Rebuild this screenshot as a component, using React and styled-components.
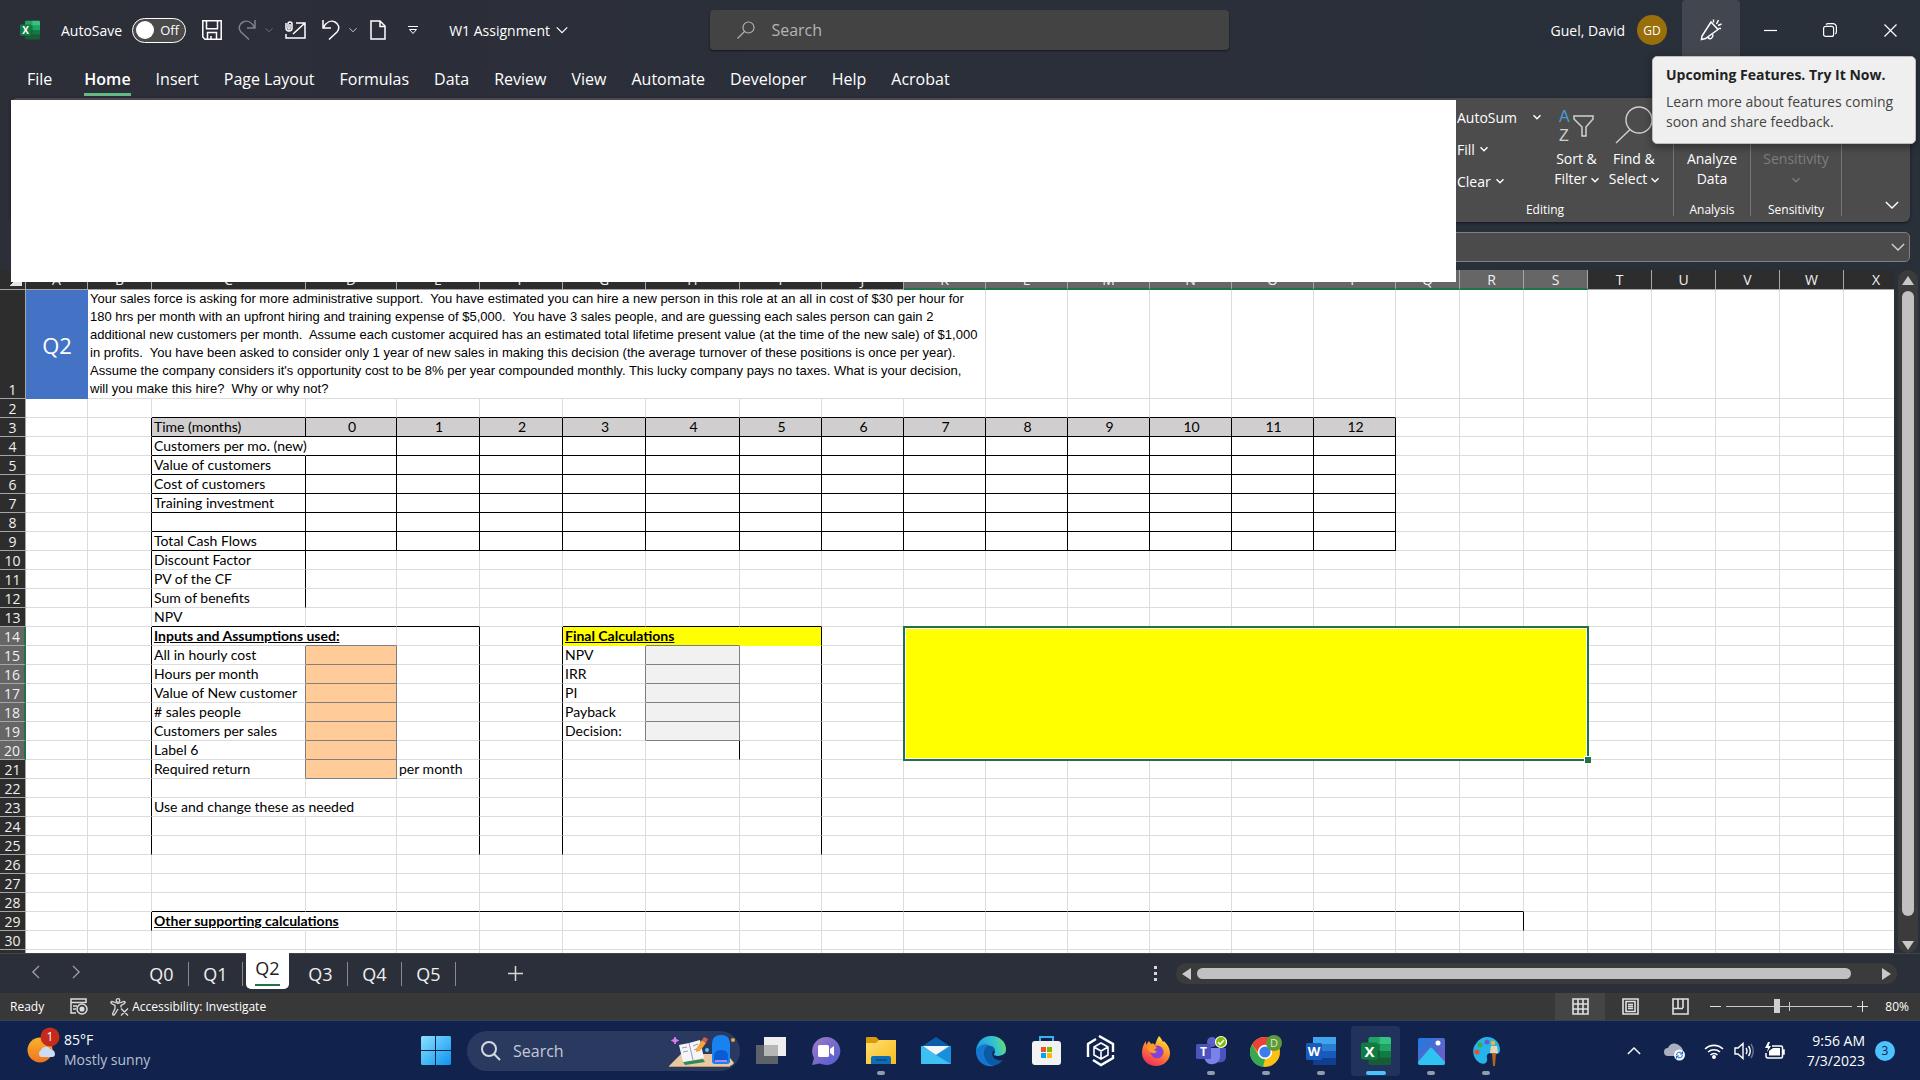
import { useState } from "react";
import styled, { createGlobalStyle } from "styled-components";

const COLUMNS = [
    ["A",62],["B",64],["C",154],["D",91],["E",83],["F",83],["G",83],["H",94],["I",82],["J",82],["K",82],["L",82],
    ["M",82],["N",82],["O",82],["P",82],["Q",64],["R",64],["S",64],["T",64],["U",64],["V",64],["W",64],["X",0]
];
const LETTERS = COLUMNS.map(c => c[0]);
const GRID = "#dcdcdc";
const GRAY = "#7f7f7f";
const QUESTION = `Your sales force is asking for more administrative support.  You have estimated you can hire a new person in this role at an all in cost of $30 per hour for
180 hrs per month with an upfront hiring and training expense of $5,000.  You have 3 sales people, and are guessing each sales person can gain 2
additional new customers per month.  Assume each customer acquired has an estimated total lifetime present value (at the time of the new sale) of $1,000
in profits.  You have been asked to consider only 1 year of new sales in making this decision (the average turnover of these positions is once per year).
Assume the company considers it's opportunity cost to be 8% per year compounded monthly. This lucky company pays no taxes. What is your decision,
will you make this hire?  Why or why not?`;

const TEXTS = {
    C3: "Time (months)", C4: "Customers per mo. (new)", C5: "Value of customers", C6: "Cost of customers",
    C7: "Training investment", C9: "Total Cash Flows", C10: "Discount Factor", C11: "PV of the CF",
    C12: "Sum of benefits", C13: "NPV", C14: "Inputs and Assumptions used:", C15: "All in hourly cost",
    C16: "Hours per month", C17: "Value of New customer", C18: "# sales people", C19: "Customers per sales",
    C20: "Label 6", C21: "Required return", E21: "per month", C23: "Use and change these as needed",
    G14: "Final Calculations", G15: "NPV", G16: "IRR", G17: "PI", G18: "Payback", G19: "Decision:",
    C29: "Other supporting calculations"
};
const TITLES = ["C14", "G14", "C29"];

function between(letter, from, to){
    return letter >= from && letter <= to;
}
function cellLook(l, r){
    const look = { right: GRID, bottom: GRID, bg: "#ffffff" };
    if(between(l,"C","P") && r >= 2 && r <= 9) look.bottom = "#000000";
    if(between(l,"B","P") && r >= 3 && r <= 9) look.right = "#000000";
    if((l === "B" || l === "C") && r >= 10 && r <= 12) look.right = "#000000";
    if(between(l,"C","P") && r === 3) look.bg = "#d0cece";
    if((between(l,"C","E") || between(l,"G","I")) && r === 13) look.bottom = "#000000";
    if("BEFI".includes(l) && r >= 14 && r <= 25) look.right = "#000000";
    if(between(l,"G","I") && r === 14){
        look.bg = "#ffff00";
        look.bottom = "#ffff00";
        if(l !== "I") look.right = "#ffff00";
    }
    if(l === "D" && r >= 14 && r <= 21) look.bottom = GRAY;
    if((l === "C" || l === "D") && r >= 15 && r <= 21) look.right = GRAY;
    if(l === "D" && r >= 15 && r <= 21) look.bg = "#ffcb99";
    if(l === "H" && r >= 14 && r <= 19) look.bottom = GRAY;
    if((l === "G" || l === "H") && r >= 15 && r <= 19) look.right = GRAY;
    if(l === "H" && r >= 15 && r <= 19) look.bg = "#f1f1f1";
    if(l === "H" && r === 20) look.right = "#000000";
    if(between(l,"C","R") && r === 28) look.bottom = "#000000";
    if((l === "B" || l === "R") && r === 29) look.right = "#000000";
    if(["C4","C14","C23","C29"].includes(l + r)) look.right = look.bg;
    return look;
}

export default function App(){
    return(
        <Page>
            <GlobalStyle/>
            <TitleBar/>
            <RibbonTabs/>
            <Ribbon/>
            <FormulaBar><Chevron size={14}/></FormulaBar>
            <Sheet/>
            <SheetTabs/>
            <StatusBar/>
            <Taskbar/>
            <BlankPanel/>
            <Tooltip role="tooltip">
                <strong>Upcoming Features. Try It Now.</strong>
                <p>Learn more about features coming soon and share feedback.</p>
            </Tooltip>
        </Page>
    );
}

function Chevron({ size = 8, dir = "down" }){
    const turn = { down: 0, up: 180, left: 90, right: -90 }[dir];
    return(
        <svg width={size} height={size} viewBox="0 0 16 16" fill="none" stroke="currentColor" strokeWidth={size < 10 ? 3 : 1.6} aria-hidden="true">
            <path d="M1 4.5 8 11.5 15 4.5" transform={`rotate(${turn} 8 8)`}/>
        </svg>
    );
}
function ExcelIcon({ size }){
    return(
        <svg width={size} height={size} viewBox="0 0 32 32" aria-hidden="true">
            <rect x="8" y="1" width="24" height="30" rx="2" fill="#185c37"/>
            <path d="M10 1h11v8H8V3a2 2 0 0 1 2-2Z" fill="#21a366"/>
            <path d="M20 1h10a2 2 0 0 1 2 2v6H20Z" fill="#33c481"/>
            <path d="M8 9h12v7H8Z" fill="#107c41"/>
            <path d="M20 9h12v7H20Z" fill="#21a366"/>
            <path d="M20 16h12v7H20Z" fill="#107c41"/>
            <rect x="0" y="7" width="18" height="18" rx="2" fill="#107c41"/>
            <text x="9" y="22" textAnchor="middle" fontSize="16" fontWeight="700" fontFamily="Open Sans, sans-serif" fill="#fff">X</text>
        </svg>
    );
}

function TitleBar(){
    const [autoSave,setAutoSave] = useState(false);
    return(
        <TITLEBAR>
            <QuickAccess>
                <ExcelIcon size={20}/>
                <AutoSave>
                    AutoSave
                    <Toggle>
                        <input type="checkbox" checked={autoSave} onChange={e => {setAutoSave(e.target.checked)}}/>
                        <i/>{autoSave ? "On" : "Off"}
                    </Toggle>
                </AutoSave>
                <ToolButton aria-label="Save" $gap={16}>
                    <svg width="20" height="20" viewBox="0 0 20 20"><path d="M.8.8h18.4v18.4H3L.8 17ZM4.500.8v8h11V.8M5.500 19v-6.500h9V19M9 19v-3"/></svg>
                </ToolButton>
                <ToolButton aria-label="Redo" $gap={16} $dim>
                    <svg width="18" height="20" viewBox="0 0 18 20"><path d="M17 0v8H9M16.500 7.500C13.500 2 9 0 5 2S0 8.500 3 12l8 7.500"/></svg>
                    <Chevron/>
                </ToolButton>
                <ToolButton aria-label="Email" $gap={12}>
                    <svg width="21" height="18" viewBox="0 0 21 18"><path d="M11 2h9v15H1v-4M20 2 8 13M1 2v5a3 3 0 0 0 6 0V3a2 2 0 0 0-4 0v4a1 1 0 0 0 2 0V3"/></svg>
                </ToolButton>
                <ToolButton aria-label="Undo" $gap={16}>
                    <svg width="18" height="20" viewBox="0 0 18 20"><path d="M1 0v8h8M1.500 7.500C4.500 2 9 0 13 2s5 6.500 2 10l-8 7.500"/></svg>
                    <Chevron/>
                </ToolButton>
                <ToolButton aria-label="New file" $gap={13}>
                    <svg width="16" height="20" viewBox="0 0 16 20"><path d="M1 1h9l5 5v13H1ZM10 1v5.500h5"/></svg>
                </ToolButton>
                <ToolButton aria-label="Customize toolbar" $gap={22} $thin>
                    <svg width="10" height="10" viewBox="0 0 10 10"><path d="M0 1.500h10M1.500 4.500h7L5 8.500Z"/></svg>
                </ToolButton>
                <FileName>W1 Assignment <Chevron size={12}/></FileName>
            </QuickAccess>
            <SearchBox>
                <svg width="18" height="18" viewBox="0 0 18 18" fill="none" stroke="#b0b0b0" strokeWidth="1.2" aria-hidden="true"><circle cx="11.500" cy="6.500" r="5.500"/><path d="M7.500 10.500.5 17.500"/></svg>
                <input type="search" placeholder="Search" aria-label="Search"/>
            </SearchBox>
            <WindowArea>
                <span>Guel, David</span>
                <Avatar>GD</Avatar>
                <WindowButton $lit aria-label="Upcoming features">
                    <svg width="22" height="22" viewBox="0 0 22 22" fill="none" stroke="#fff" strokeWidth="1.5"><path d="m11 3 7 7.500L5.500 19.500 1.500 20.500 2 17ZM8 18.500c2 2.500 5 1 5-3M13.500 3.500V.5M16.500 5l2-4M18 6.500l3.500-1.500M18.500 9.500h2.500"/></svg>
                </WindowButton>
                <WindowButton aria-label="Minimize"><svg width="13" height="13" viewBox="0 0 13 13" stroke="#fff" strokeWidth="1.2"><path d="M0 6.500h13"/></svg></WindowButton>
                <WindowButton aria-label="Restore"><svg width="14" height="14" viewBox="0 0 14 14" fill="none" stroke="#fff" strokeWidth="1.2"><rect x=".6" y="3.400" width="10" height="10" rx="2"/><path d="M3 1.500Q4 .6 5 .6h5a3.400 3.400 0 0 1 3.400 3.400v5q0 1-1 2"/></svg></WindowButton>
                <WindowButton aria-label="Close"><svg width="13" height="13" viewBox="0 0 13 13" stroke="#fff" strokeWidth="1.200"><path d="m.5.5 12 12M12.500.5l-12 12"/></svg></WindowButton>
            </WindowArea>
        </TITLEBAR>
    );
}

function RibbonTabs(){
    const [active,setActive] = useState("Home");
    const tabs = ["File","Home","Insert","Page Layout","Formulas","Data","Review","View","Automate","Developer","Help","Acrobat"];
    return(
        <TABS>
            {tabs.map(item => <RibbonTab key={item} $active={item === active} onClick={() => {setActive(item)}}>{item}</RibbonTab>)}
        </TABS>
    );
}

function Ribbon(){
    return(
        <RIBBON>
            <Group $width={257}>
                <GroupBody $end={9}>
                    <SmallCommands>
                        <button>AutoSum <Chevron/></button>
                        <button>Fill <Chevron/></button>
                        <button>Clear <Chevron/></button>
                    </SmallCommands>
                    <BigCommand>
                        <svg width="36" height="38" viewBox="0 0 36 38" aria-hidden="true">
                            <text x="1" y="15.500" fontSize="16" fontFamily="Liberation Sans, sans-serif" fill="#4a9bd8">A</text>
                            <text x="1" y="34.500" fontSize="16" fontFamily="Liberation Sans, sans-serif" fill="#d0d0d0">Z</text>
                            <path d="M16 10h19v3l-7 8v9h-4v-9l-8-8Z" fill="none" stroke="#d0d0d0" strokeWidth="1.500"/>
                        </svg>
                        <span>Sort &amp;</span><span>Filter <Chevron/></span>
                    </BigCommand>
                    <BigCommand>
                        <svg width="38" height="38" viewBox="0 0 38 38" fill="none" stroke="#d0d0d0" strokeWidth="1.400" aria-hidden="true"><circle cx="24" cy="14" r="13"/><path d="M15 23.500 1 37"/></svg>
                        <span>Find &amp;</span><span>Select <Chevron/></span>
                    </BigCommand>
                </GroupBody>
                <GroupName>Editing</GroupName>
            </Group>
            <Group $width={77}>
                <GroupBody>
                    <BigCommand>
                        <svg width="40" height="38" viewBox="0 0 40 38" fill="none" stroke="#e0e0e0" strokeWidth="2" aria-hidden="true"><path d="M1 1h38v36H1Z"/></svg>
                        <span>Analyze</span><span>Data</span>
                    </BigCommand>
                </GroupBody>
                <GroupName>Analysis</GroupName>
            </Group>
            <Group $width={91}>
                <GroupBody>
                    <BigCommand disabled>
                        <svg width="38" height="38" viewBox="0 0 38 38" aria-hidden="true"><path d="M4 4h30v24H4Z" fill="none" stroke="#777"/></svg>
                        <span>Sensitivity</span><span><Chevron/></span>
                    </BigCommand>
                </GroupBody>
                <GroupName>Sensitivity</GroupName>
            </Group>
            <Collapse aria-label="Collapse ribbon"><Chevron size={14}/></Collapse>
        </RIBBON>
    );
}

function Sheet(){
    const rows = Array.from({ length: 29 }, (_, i) => i + 2);
    return(
        <SHEET>
            <Grid>
                <colgroup>
                    <col width="26"/>
                    {COLUMNS.map(([l,w]) => <col key={l} width={w || undefined}/>)}
                </colgroup>
                <thead>
                    <tr>
                        <Corner aria-label="Select all"/>
                        {LETTERS.map(l => <ColHead key={l} scope="col" $on={between(l,"K","S")}>{l}</ColHead>)}
                    </tr>
                </thead>
                <tbody>
                    <tr>
                        <RowHead scope="row">1</RowHead>
                        <QuestionNo>Q2</QuestionNo>
                        <Question colSpan={10}>{QUESTION}</Question>
                        {LETTERS.slice(11).map(l => <Cell key={l} $right={GRID} $bottom={GRID}/>)}
                    </tr>
                    {rows.map(r => <SheetRow key={r} r={r}/>)}
                    <tr>
                        <RowHead/>
                        {LETTERS.map(l => <Cell key={l} $right={GRID} $bottom={GRID}/>)}
                    </tr>
                </tbody>
            </Grid>
            <VScroll>
                <svg width="12" height="9" viewBox="0 0 12 9"><path d="M6 0 12 9H0Z"/></svg>
                <i/>
                <svg width="12" height="9" viewBox="0 0 12 9"><path d="M6 9 0 0h12Z"/></svg>
            </VScroll>
        </SHEET>
    );
}
function SheetRow({ r }){
    const inside = r >= 14 && r <= 20;
    return(
        <tr>
            <RowHead scope="row" $on={inside}>{r}</RowHead>
            {LETTERS.map(l => {
                if(inside && between(l,"K","S")){
                    return r === 14 && l === "K" ? <Selected key={l} colSpan={9} rowSpan={7}/> : null;
                }
                const look = cellLook(l, r);
                const month = r === 3 && between(l,"D","P");
                return(
                    <Cell key={l} $bg={look.bg} $right={look.right} $bottom={look.bottom} $center={month} $title={TITLES.includes(l + r)}>
                        {month ? LETTERS.indexOf(l) - 3 : TEXTS[l + r]}
                    </Cell>
                );
            })}
        </tr>
    );
}

function SheetTabs(){
    const [active,setActive] = useState("Q2");
    return(
        <SHEETTABS>
            <TabArrows>
                <button aria-label="Previous sheet"><Chevron size={14} dir="left"/></button>
                <button aria-label="Next sheet"><Chevron size={14} dir="right"/></button>
            </TabArrows>
            {["Q0","Q1","Q2","Q3","Q4","Q5"].map(q => (
                <SheetTab key={q} $active={q === active} onClick={() => {setActive(q)}}><span>{q}</span></SheetTab>
            ))}
            <AddSheet aria-label="New sheet">
                <svg width="15" height="15" viewBox="0 0 15 15" stroke="#d8d8d8" strokeWidth="1.500"><path d="M7.500 0v15M0 7.500h15"/></svg>
            </AddSheet>
            <Dots><i/><i/><i/></Dots>
            <HScroll>
                <svg width="9" height="12" viewBox="0 0 9 12"><path d="M0 6 9 0v12Z"/></svg>
                <i/>
                <svg width="9" height="12" viewBox="0 0 9 12"><path d="M9 6 0 0v12Z"/></svg>
            </HScroll>
        </SHEETTABS>
    );
}

function StatusBar(){
    const [zoom,setZoom] = useState(40);
    return(
        <STATUS>
            <span>Ready</span>
            <svg width="18" height="17" viewBox="0 0 18 17" fill="none" stroke="#ddd" strokeWidth="1.500"><path d="M6 15H1V1h15v4M1 4.500h15M3 8h4M3 11h3"/><circle cx="12" cy="11" r="5"/><circle cx="12" cy="11" r="1.800" fill="#ddd"/></svg>
            <AccessButton>
                <svg width="19" height="18" viewBox="0 0 19 18" fill="none" stroke="#ddd" strokeWidth="1.300"><circle cx="8" cy="2.500" r="1.800"/><path d="M8 5.500 2 3.500Q0 4 1.500 5.500L5 7.500v3L2.500 16q.5 2 2 .5L8 11M8 5.500l6-2q2 .5.5 2L11 7.500v2M11 10.500l7 7M18 10.500l-7 7"/></svg>
                Accessibility: Investigate
            </AccessButton>
            <ViewButton $on $first aria-label="Normal view">
                <svg width="17" height="17" viewBox="0 0 17 17"><path d="M1 1h15v15H1ZM6 1v15M11 1v15M1 6h15M1 11h15"/></svg>
            </ViewButton>
            <ViewButton aria-label="Page layout view">
                <svg width="17" height="17" viewBox="0 0 17 17"><path d="M1 1h15v15H1ZM4 3.500h9v10H4ZM6 6.500h5M6 8.500h5M6 10.500h5"/></svg>
            </ViewButton>
            <ViewButton aria-label="Page break view">
                <svg width="17" height="17" viewBox="0 0 17 17"><path d="M1 1h15v15H1ZM6 1v9M11 1v9M1 10.500h10"/></svg>
            </ViewButton>
            <ZoomButton aria-label="Zoom out"><svg width="11" height="11" viewBox="0 0 11 11"><path d="M0 5.500h11"/></svg></ZoomButton>
            <Zoom type="range" min="0" max="100" value={zoom} onChange={e => {setZoom(e.target.value)}} aria-label="Zoom"/>
            <ZoomButton aria-label="Zoom in"><svg width="11" height="11" viewBox="0 0 11 11"><path d="M0 5.500h11M5.500 0v11"/></svg></ZoomButton>
            <Percent>80%</Percent>
        </STATUS>
    );
}

/* taskbar drawings share a 32px box */
function Icon({ children }){
    return <svg width="32" height="32" viewBox="0 0 32 32" aria-hidden="true">{children}</svg>;
}
const APPS = [
    { name: "Task view", icon: <Icon><path d="M1 10h22v19H1Z" fill="#5d6169"/><path d="M9 2h22v19H9Z" fill="#eeeeee"/><path d="M9 10h14v11H9Z" fill="#b4b6b8"/></Icon> },
    { name: "Chat", icon: <Icon>
        <defs><linearGradient id="chat" x1="0" y1="0" x2="1" y2="1"><stop offset="0" stopColor="#9f7bc6"/><stop offset="1" stopColor="#4f5bd0"/></linearGradient></defs>
        <path d="M16 2a14 14 0 1 1-6 26.500L2 30l2-7A14 14 0 0 1 16 2Z" fill="url(#chat)"/><rect x="8" y="10" width="11" height="12" rx="1.500" fill="#fff"/><path d="m20 14 4-3v10l-4-3Z" fill="#fff"/></Icon> },
    { name: "File Explorer", open: true, icon: <Icon>
        <defs><linearGradient id="folder" x1="0" y1="0" x2="1" y2="1"><stop offset="0" stopColor="#ffdf70"/><stop offset="1" stopColor="#f8bc1d"/></linearGradient></defs>
        <path d="M1 3q0-1 1-1h9l3 3v6H1Z" fill="#d99a0b"/><path d="M1 8h10l3-3h17v24H1Z" fill="url(#folder)"/><path d="M6 29v-6q0-2 2-2h16q2 0 2 2v6Z" fill="#0f6cb5"/><path d="M11 25h11" stroke="#0a4a86" strokeWidth="1.500"/></Icon> },
    { name: "Mail", icon: <Icon><path d="M1 12 16 2l15 10Z" fill="#0b5cab"/><path d="M1 11h30v18H1Z" fill="#35b4ee"/><path d="M3 11h26L16 20Z" fill="#f4f4f4"/><path d="M1 11 31 29H1Z" fill="#3fc0f5"/><path d="M31 11v18L16 20Z" fill="#1b8edb"/></Icon> },
    { name: "Edge", icon: <Icon>
        <defs><linearGradient id="edge" x1="0" y1="0.500" x2="1" y2="0.300"><stop offset="0" stopColor="#1b9de2"/><stop offset="0.600" stopColor="#35c1d0"/><stop offset="1" stopColor="#6be06a"/></linearGradient></defs>
        <circle cx="16" cy="16" r="15" fill="#0c59a4"/><path d="M1 16C2 6 9 1 16 1c9 0 15 6 15 13 0 5-4 7-8 7-3 0-5-1-4-2 2-3 1-7-3-8C10 9 3 12 1 16Z" fill="url(#edge)"/><path d="M1 16c2-5 8-8 13-6-5 2-7 9-3 15 2 4 5 5 8 6C8 33 1 25 1 16Z" fill="#1476cf"/><path d="M19 19c-1 1 1 2 4 2 3 0 5-1 8-3l1 6c-4 2-10 2-13-1-2-2-2-5-1-7 2 0 2 1 1 3Z" fill="#11234c"/></Icon> },
    { name: "Store", icon: <Icon><path d="M10 7V2h13v5" fill="none" stroke="#35b4ee" strokeWidth="2"/><rect x="2" y="6" width="29" height="24" rx="3" fill="#f2f2f2"/><path d="M11 12h5v5h-5Z" fill="#f25022"/><path d="M17 12h5v5h-5Z" fill="#7fba00"/><path d="M11 18h5v5h-5Z" fill="#00a4ef"/><path d="M17 18h5v5h-5Z" fill="#ffb900"/></Icon> },
    { name: "Cube", icon: <Icon><g fill="none" stroke="#fff" strokeWidth="2.400"><path d="m14 1 14 8v8M3 22V9l8-5M28 20v3l-12 7-8-5"/><path d="m16 8 7 4v8l-7 4-7-4v-8ZM9 12l7 4 7-4M16 16v8" strokeWidth="1.600"/></g></Icon> },
    { name: "Firefox", icon: <Icon>
        <defs><linearGradient id="fox" x1="0.800" y1="0" x2="0.300" y2="1"><stop offset="0" stopColor="#fff04a"/><stop offset="0.400" stopColor="#ff9a28"/><stop offset="1" stopColor="#f32a5b"/></linearGradient></defs>
        <path d="M19 1c2 2 3 4 4 6l1-1c3 3 6 7 6 12a14 13 0 0 1-28 0c0-5 1-8 4-12v4l3-4 2 3c2-1 3 0 4 1 1-3 2-6 4-9Z" fill="url(#fox)"/><circle cx="17" cy="17" r="6.500" fill="#8343d8"/><path d="M7 12c5-3 9-1 10 1-4 1-3 3 0 3-2 4-6 2-8 0Z" fill="#ff9a28"/></Icon> },
    { name: "Teams", open: true, icon: <Icon><circle cx="17" cy="7" r="5" fill="#5b5fc7"/><path d="M21 13h10v9a6 6 0 0 1-10 4Z" fill="#4b53bc"/><path d="M10 13h15v9a8 8 0 0 1-15 3Z" fill="#7b83eb"/><rect x="1" y="9" width="15" height="15" rx="1.500" fill="#4b53bc"/><text x="8.500" y="21" textAnchor="middle" fontSize="12" fontWeight="700" fontFamily="Open Sans, sans-serif" fill="#fff">T</text><circle cx="26" cy="7" r="5.500" fill="#7fb900" stroke="#fff" strokeWidth="1.200"/><path d="m23 7 2 2.500 4-4.500" fill="none" stroke="#fff" strokeWidth="1.500"/></Icon> },
    { name: "Chrome", open: true, icon: <Icon><circle cx="15" cy="17" r="15" fill="#fbc116"/><path d="M2 9.500A15 15 0 0 1 28 9.500L15 10l-6.500 8Z" fill="#ea4335"/><path d="M2 9.500 9 21q2 3 6 3l-2 8A15 15 0 0 1 2 9.500Z" fill="#34a853"/><circle cx="15" cy="17" r="7.200" fill="#fff"/><circle cx="15" cy="17" r="5.600" fill="#3b7ded"/><circle cx="24" cy="8" r="8" fill="#5c9a3a"/><text x="24" y="12" textAnchor="middle" fontSize="11" fontFamily="Open Sans, sans-serif" fill="#d9ecc8">D</text></Icon> },
    { name: "Word", open: true, icon: <Icon><path d="M8 2h23v8H8Z" fill="#41a5ee"/><path d="M8 9h23v7H8Z" fill="#2b7cd3"/><path d="M8 16h23v7H8Z" fill="#185abd"/><path d="M8 23h23v7H8Z" fill="#103f91"/><rect x="1" y="8" width="16" height="17" rx="1.500" fill="#185abd"/><text x="9" y="21" textAnchor="middle" fontSize="13" fontWeight="700" fontFamily="Open Sans, sans-serif" fill="#fff">W</text></Icon> },
    { name: "Excel", open: true, active: true, icon: <ExcelIcon size={30}/> },
    { name: "Photos", open: true, icon: <Icon>
        <defs><linearGradient id="photo" x1="0" y1="0" x2="1" y2="1"><stop offset="0" stopColor="#1e7be0"/><stop offset="1" stopColor="#7f57c2"/></linearGradient></defs>
        <rect x="3" y="3" width="27" height="27" rx="2" fill="url(#photo)"/><path d="m3 27 12-14q1-1 2 0l13 14v1q0 2-2 2H5q-2 0-2-2Z" fill="#2fc3f2"/><circle cx="23" cy="8" r="2.500" fill="#fff"/></Icon> },
    { name: "Paint", open: true, icon: <Icon><path d="M17 2c8 0 13 6 13 13 0 4-4 5-7 4-4-2-7 0-6 4 1 5-3 7-7 5C4 25 1 16 5 10c3-5 7-8 12-8Z" fill="#25b5ea"/><circle cx="17" cy="7" r="2.500" fill="#6a5acd"/><circle cx="10" cy="10" r="2.500" fill="#34b23e"/><circle cx="7" cy="17" r="2.500" fill="#e6512e"/><circle cx="23" cy="8" r="2.200" fill="#f3b61f"/><path d="M21 11h6l1 7h-8Z" fill="#e6d3b5"/><path d="M22 18h4l-1 13h-2Z" fill="#b1651e"/></Icon> }
];

function Taskbar(){
    return(
        <TASKBAR>
            <Weather>
                <svg width="34" height="38" viewBox="0 0 34 38" aria-hidden="true">
                    <defs><linearGradient id="sun" x1="0" y1="0" x2="0" y2="1"><stop offset="0" stopColor="#f8b42c"/><stop offset="1" stopColor="#ee7420"/></linearGradient></defs>
                    <circle cx="13" cy="23" r="12.500" fill="url(#sun)"/>
                    <path d="M14 30a4 4 0 0 1 0-7 5 5 0 0 1 9-1q5 1 5 5 0 3-3 3Z" fill="#c9dcf8"/>
                    <circle cx="23" cy="10" r="9.500" fill="#c42b1c"/>
                    <text x="23" y="14" textAnchor="middle" fontSize="12" fontFamily="Open Sans, sans-serif" fill="#fff">1</text>
                </svg>
                <p>85°F<span>Mostly sunny</span></p>
            </Weather>
            <Center>
                <StartButton aria-label="Start">
                    <svg width="30" height="30" viewBox="0 0 30 30">
                        <defs><linearGradient id="start" x1="0" y1="0" x2="1" y2="1"><stop offset="0" stopColor="#8be0ff"/><stop offset="1" stopColor="#0a94f0"/></linearGradient></defs>
                        <path d="M1 0h13v14H0V1ZM15 0h14l1 1v13H15ZM0 15h14v14H1L0 28ZM15 15h15v13l-1 1H15Z" fill="url(#start)"/>
                    </svg>
                </StartButton>
                <TaskSearch>
                    <svg width="20" height="20" viewBox="0 0 20 20" fill="none" stroke="#d5d9e2" strokeWidth="2" aria-hidden="true"><circle cx="8" cy="8" r="7"/><path d="m13 13 6 6"/></svg>
                    <input type="search" placeholder="Search" aria-label="Search Windows"/>
                    <svg width="66" height="34" viewBox="0 0 66 34" aria-hidden="true">
                        <path d="M12 20h46l7 9q-1 2-4 3H0Z" fill="#e8c9a0"/><path d="M0 32h61v1H0Z" fill="#c79c68"/>
                        <path d="m14 28 20-3 2 3-20 3Z" fill="#2a8c56"/><path d="m10 11 10-2 11-3 4 18-10 2-11 2Z" fill="#f4f4fa"/><path d="m20 9 4 17M13 14l5-1M14 18l5-1M24 12l5-2M25 16l5-2" stroke="#9a9ab0" fill="none"/>
                        <path d="m27 15 6-9 4 3-6 8-4 1Z" fill="#f3a63a"/><path d="m33 6 2-3 4 2-2 4Z" fill="#e05a4a"/>
                        <path d="M43 27V10q0-9 9-9t9 9v17q0 3-3 3H46q-3 0-3-3Z" fill="#1683f0"/><path d="M45 27v-5q0-6 7-6t7 6v5Z" fill="#0b5bd3"/><path d="M46 27h12" stroke="#b184ff" strokeWidth="2"/>
                        <path d="m6 3 1 2.500L9.500 6.500 7 7.500 6 10 5 7.500 2.500 6.500 5 5.500Z" fill="#df7df0" stroke="#df7df0"/><circle cx="64" cy="6" r="2" fill="#f3a63a"/><circle cx="38" cy="16" r="2" fill="#4fc8ea"/>
                    </svg>
                </TaskSearch>
                {APPS.map(app => <AppButton key={app.name} aria-label={app.name} $open={app.open} $active={app.active}>{app.icon}</AppButton>)}
            </Center>
            <Tray>
                <button aria-label="Hidden icons"><Chevron size={14} dir="up"/></button>
                <svg width="22" height="20" viewBox="0 0 22 20" aria-hidden="true"><path d="M4 15a4 4 0 0 1 0-8 7 7 0 0 1 12-2q3 2 3 6v4Z" fill="#aab0bd"/><circle cx="15.500" cy="14" r="5.500" fill="#f4f8ff"/><path d="M12.500 14a3 3 0 0 1 5.500-1.500M18.500 14a3 3 0 0 1-5.500 1.500M18.500 10.500v2.500H16M12.500 17.500V15H15" fill="none" stroke="#1267c2"/></svg>
                <svg width="20" height="16" viewBox="0 0 20 16" fill="none" stroke="#fff" strokeWidth="1.600" aria-hidden="true"><path d="M1 6a13 13 0 0 1 18 0M4 9a9 9 0 0 1 12 0M6.500 12a5 5 0 0 1 7 0"/><circle cx="10" cy="14" r="1.200" fill="#fff"/></svg>
                <svg width="20" height="18" viewBox="0 0 20 18" fill="none" stroke="#fff" strokeWidth="1.400" aria-hidden="true"><path d="M1 6h3l5-4.500v15L4 12H1ZM12 6q2 3 0 6M14.500 4q3.500 5 0 10"/><path d="M17 2q4.500 7 0 14" stroke="#68738d"/></svg>
                <svg width="21" height="18" viewBox="0 0 21 18" fill="none" stroke="#fff" strokeWidth="1.500" aria-hidden="true"><path d="M8 4h9q1.500 0 1.500 1.500v9q0 1.500-1.500 1.500H4q-2 0-2-2v-3M18.500 8H20v4h-1.500"/><path d="M5 13V9l4-3h7v7.500H5Z" fill="#fff" stroke="none"/><path d="M4 0 1 6h3l-1 4 4-6H4.500L6 0Z" fill="#fff" stroke="none"/></svg>
                <Clock>9:56 AM<br/>7/3/2023</Clock>
                <Count>3</Count>
            </Tray>
        </TASKBAR>
    );
}

const GlobalStyle = createGlobalStyle`
    *{
        box-sizing: border-box;
    }
    body{
        margin: 0;
        overflow: hidden;
        font-family: "Open Sans", "Noto Sans", sans-serif;
        font-size: 14px;
        color: #FFFFFF;
    }
    button, input{
        font: inherit;
        color: inherit;
        background: none;
        border: 0;
        padding: 0;
        margin: 0;
    }
    p{
        margin: 0;
    }
`;
const Page = styled.div`
    position: relative;
    display: flex;
    flex-direction: column;
    height: 100vh;
    background-color: #2B2F39;
    background-image: linear-gradient(90deg, #2C2E38, #29303A);
`;
const TITLEBAR = styled.header`
    display: grid;
    grid-template-columns: 37fr 27fr 36fr;
    align-items: center;
    flex: none;
    height: 60px;
`;
const QuickAccess = styled.div`
    display: flex;
    align-items: center;
    padding-left: 20px;
`;
const AutoSave = styled.label`
    display: flex;
    align-items: center;
    gap: 10px;
    margin-left: 21px;
`;
const Toggle = styled.span`
    display: flex;
    align-items: center;
    gap: 6px;
    width: 54px;
    height: 25px;
    padding-left: 3px;
    font-size: 13px;
    background-color: #4A4A4A;
    border: 1px solid #FFFFFF;
    border-radius: 13px;
    input{
        position: absolute;
        opacity: 0;
    }
    i{
        width: 18px;
        height: 18px;
        border-radius: 50%;
        background-color: #FFFFFF;
    }
`;
const ToolButton = styled.button`
    display: flex;
    align-items: center;
    gap: 9px;
    margin-left: ${props => props.$gap}px;
    opacity: ${props => props.$dim ? 0.4 : 1};
    svg{
        fill: none;
        stroke: #FFFFFF;
        stroke-width: ${props => props.$thin ? 1 : 1.5};
    }
`;
const FileName = styled.button`
    display: flex;
    align-items: center;
    gap: 6px;
    margin-left: 31px;
`;
const SearchBox = styled.label`
    display: flex;
    align-items: center;
    gap: 16px;
    height: 40px;
    padding: 0 27px;
    font-size: 16px;
    background-color: #434343;
    border-radius: 4px;
    box-shadow: 0 1px 2px #15181E;
    input{
        flex: 1;
        outline: none;
    }
    input::placeholder{
        color: #B4B4B4;
    }
`;
const WindowArea = styled.div`
    display: flex;
    align-items: center;
    justify-content: flex-end;
    height: 60px;
`;
const Avatar = styled.span`
    display: flex;
    align-items: center;
    justify-content: center;
    width: 30px;
    height: 30px;
    margin: 0 15px 0 12px;
    font-size: 12px;
    background-color: #986F0B;
    border-radius: 50%;
`;
const WindowButton = styled.button`
    display: flex;
    align-items: center;
    justify-content: center;
    width: ${props => props.$lit ? 58 : 60}px;
    height: 60px;
    border-radius: 4px;
    background-color: ${props => props.$lit ? "#42464F" : "transparent"};
`;
const TABS = styled.nav`
    display: flex;
    gap: 25px;
    flex: none;
    height: 38px;
    padding-left: 27px;
`;
const RibbonTab = styled.button`
    height: 36px;
    padding-top: 5px;
    font-size: 16px;
    line-height: 28px;
    font-weight: ${props => props.$active ? 600 : 400};
    border-bottom: 3px solid ${props => props.$active ? "#66B786" : "transparent"};
    &:first-child{
        margin-right: 7px;
    }
`;
const RIBBON = styled.section`
    display: flex;
    justify-content: flex-end;
    flex: none;
    height: 124px;
    margin: 0 10px 10px 11px;
    padding-right: 68px;
    background-color: #4C4C4C;
    border-radius: 6px;
    box-shadow: 0 1px 3px #15181E;
`;
const Group = styled.div`
    display: flex;
    flex-direction: column;
    justify-content: space-between;
    width: ${props => props.$width}px;
    margin: 8px 0 6px;
    border-right: 1px solid #777777;
`;
const GroupBody = styled.div`
    display: flex;
    justify-content: flex-end;
    padding-right: ${props => props.$end || 0}px;
`;
const SmallCommands = styled.div`
    display: flex;
    flex-direction: column;
    align-items: flex-start;
    gap: 12px;
    flex: 1;
    padding: 1px 0 0 40px;
    button{
        display: flex;
        align-items: center;
        gap: 5px;
        height: 20px;
        white-space: nowrap;
    }
    button:first-child{
        gap: 16px;
    }
`;
const BigCommand = styled.button`
    display: flex;
    flex-direction: column;
    align-items: center;
    flex: 1 0 auto;
    padding: 0 5px;
    line-height: 20px;
    white-space: nowrap;
    color: ${props => props.disabled ? "#7D7D7D" : "#FFFFFF"};
    > svg{
        margin-bottom: 5px;
    }
    ${SmallCommands} + &, ${SmallCommands} + & + &{
        flex: none;
    }
`;
const GroupName = styled.span`
    font-size: 12px;
    line-height: 12px;
    text-align: center;
`;
const Collapse = styled.button`
    position: absolute;
    top: 197px;
    right: 21px;
`;
const FormulaBar = styled.div`
    display: flex;
    align-items: center;
    justify-content: flex-end;
    flex: none;
    height: 30px;
    margin: 0 10px 8px 11px;
    padding-right: 4px;
    color: #D0D0D0;
    background-color: #4B4B4B;
    border: 1px solid #808080;
    border-radius: 5px;
`;
const BlankPanel = styled.div`
    position: absolute;
    top: 100px;
    left: 11px;
    right: 464px;
    height: 182px;
    background-color: #FFFFFF;
`;
const Tooltip = styled.div`
    position: absolute;
    top: 56px;
    right: 4px;
    width: 264px;
    height: 88px;
    padding: 8px 12px 0 13px;
    line-height: 20px;
    color: #444444;
    background-color: #EFEFEF;
    border: 1px solid #BDBDBD;
    border-radius: 5px;
    box-shadow: 0 3px 8px rgba(0, 0, 0, 0.4);
    white-space: nowrap;
    strong{
        color: #222222;
    }
    p{
        margin-top: 7px;
        white-space: normal;
    }
`;
const SHEET = styled.main`
    display: flex;
    align-items: stretch;
    flex: 1;
    min-height: 0;
    overflow: hidden;
`;
const Grid = styled.table`
    flex: 1;
    align-self: flex-start;
    width: 100%;
    min-width: 0;
    table-layout: fixed;
    border-collapse: separate;
    border-spacing: 0;
    background-color: #FFFFFF;
    font-family: Lato, "Open Sans", sans-serif;
    color: #000000;
`;
const Head = styled.th`
    height: 19px;
    padding: 0;
    font-family: "Open Sans", sans-serif;
    font-size: 14px;
    font-weight: 400;
    line-height: 17px;
    color: #F0F0F0;
    background-color: ${props => props.$on ? "#666666" : "#2D2D2D"};
`;
const ColHead = styled(Head)`
    height: 20px;
    border-right: 1px solid #A6A6A6;
    border-bottom: ${props => props.$on ? "2px solid #217346" : "1px solid #A6A6A6"};
    &:last-child{
        padding-left: 14px;
        border-right: 0;
    }
`;
const Corner = styled(ColHead)`
    background-image: linear-gradient(135deg, transparent 50%, #E6E6E6 50%);
    background-repeat: no-repeat;
    background-size: 13px 13px;
    background-position: 9px 3px;
`;
const RowHead = styled(Head)`
    vertical-align: bottom;
    border-bottom: 1px solid #A6A6A6;
    border-right: ${props => props.$on ? "2px solid #217346" : "1px solid #A6A6A6"};
`;
const Cell = styled.td`
    height: 19px;
    padding: 0 0 0 2px;
    font-size: 14px;
    line-height: 18px;
    white-space: nowrap;
    background-color: ${props => props.$bg || "#FFFFFF"};
    border-right: 1px solid ${props => props.$right};
    border-bottom: 1px solid ${props => props.$bottom};
    text-align: ${props => props.$center ? "center" : "left"};
    font-weight: ${props => props.$title ? 700 : 400};
    text-decoration: ${props => props.$title ? "underline" : "none"};
    &:last-child{
        border-right: 0;
    }
`;
const QuestionNo = styled.td`
    height: 109px;
    padding: 0;
    font-family: "Open Sans", sans-serif;
    font-size: 22px;
    text-align: center;
    color: #FFFFFF;
    background-color: #4472C4;
`;
const Question = styled.td`
    padding: 0 0 0 2px;
    font-family: "Liberation Sans", Arial, sans-serif;
    font-size: 13px;
    line-height: 18px;
    white-space: pre;
    border-right: 1px solid ${GRID};
    border-bottom: 1px solid ${GRID};
`;
const Selected = styled.td`
    position: relative;
    background-color: #FFFF00;
    outline: 2px solid #217346;
    outline-offset: -1px;
    box-shadow: inset 0 0 0 2px #FFFFFF;
    &::after{
        content: "";
        position: absolute;
        right: -3px;
        bottom: -3px;
        width: 6px;
        height: 6px;
        background-color: #217346;
        border: solid #FFFFFF;
        border-width: 1px 0 0 1px;
    }
`;
const VScroll = styled.div`
    display: flex;
    flex-direction: column;
    align-items: center;
    justify-content: space-between;
    flex: none;
    width: 20px;
    margin: 0 2px 0 4px;
    padding: 6px 0 3px;
    background-color: #3B3B3B;
    border-radius: 10px;
    fill: #C8C8C8;
    i{
        width: 12px;
        flex: 1;
        margin: 6px 0 25px;
        border-radius: 6px;
        background-color: #C1C1C1;
    }
`;
const SHEETTABS = styled.nav`
    display: flex;
    align-items: center;
    flex: none;
    height: 40px;
    background-color: #2B2F39;
    border-top: 1px solid #444444;
`;
const TabArrows = styled.div`
    display: flex;
    gap: 26px;
    width: 135px;
    padding-left: 29px;
    color: #A0A0A0;
`;
const SheetTab = styled.button`
    align-self: ${props => props.$active ? "flex-start" : "center"};
    width: ${props => props.$active ? 43 : 54}px;
    height: ${props => props.$active ? 36 : 24}px;
    margin: ${props => props.$active ? "-1px 5px 0 3px" : "0"};
    padding-top: ${props => props.$active ? 1 : 0}px;
    font-size: 18px;
    line-height: 22px;
    color: ${props => props.$active ? "#222222" : "#F0F0F0"};
    background-color: ${props => props.$active ? "#FFFFFF" : "transparent"};
    border-radius: ${props => props.$active ? "0 0 5px 5px" : "0"};
    border-right: ${props => props.$active ? "0" : "1px solid #8A8A8A"};
    span{
        display: ${props => props.$active ? "inline-block" : "inline"};
        height: 29px;
        border-bottom: ${props => props.$active ? "2px solid #217346" : "0"};
    }
`;
const AddSheet = styled.button`
    display: flex;
    margin-left: 52px;
    margin-right: auto;
`;
const Dots = styled.div`
    display: flex;
    flex-direction: column;
    gap: 3px;
    margin-right: 19px;
    i{
        width: 3px;
        height: 3px;
        background-color: #D8D8D8;
    }
`;
const HScroll = styled.div`
    display: flex;
    align-items: center;
    justify-content: space-between;
    width: 721px;
    height: 21px;
    margin-right: 23px;
    padding: 0 6px;
    background-color: #3B3B3B;
    border-radius: 10px;
    fill: #C8C8C8;
    i{
        flex: 1;
        height: 11px;
        margin: 0 31px 0 6px;
        border-radius: 6px;
        background-color: #C1C1C1;
    }
`;
const STATUS = styled.footer`
    display: flex;
    align-items: center;
    flex: none;
    height: 27px;
    padding: 0 11px 0 10px;
    font-size: 12px;
    background-color: #383838;
    > svg{
        margin-left: 26px;
    }
`;
const AccessButton = styled.button`
    display: flex;
    align-items: center;
    gap: 3px;
    margin-left: 22px;
`;
const ViewButton = styled.button`
    display: flex;
    align-items: center;
    justify-content: center;
    width: 50px;
    height: 27px;
    margin-left: ${props => props.$first ? "auto" : "0"};
    background-color: ${props => props.$on ? "#454545" : "transparent"};
    svg{
        fill: none;
        stroke: #E0E0E0;
        stroke-width: 1.6;
    }
`;
const ZoomButton = styled.button`
    display: flex;
    margin: 0 5px;
    stroke: #E0E0E0;
`;
const Zoom = styled.input`
    appearance: none;
    width: 126px;
    height: 14px;
    background: linear-gradient(#C8C8C8, #C8C8C8) center / 1px 9px no-repeat;
    &::-webkit-slider-runnable-track{
        height: 1px;
        background-color: #C8C8C8;
    }
    &::-webkit-slider-thumb{
        appearance: none;
        width: 6px;
        height: 14px;
        margin-top: -7px;
        background-color: #D0D0D0;
    }
`;
const Percent = styled.span`
    width: 36px;
    text-align: right;
`;
const TASKBAR = styled.footer`
    display: grid;
    grid-template-columns: 1fr auto 1fr;
    flex: none;
    height: 60px;
    background-color: #11234C;
    border-top: 1px solid #33415F;
`;
const Weather = styled.div`
    display: flex;
    gap: 3px;
    padding: 6px 0 0 27px;
    line-height: 20px;
    p{
        padding-top: 3px;
    }
    span{
        display: block;
        color: #B7C0D3;
    }
`;
const Center = styled.div`
    display: flex;
    align-items: center;
`;
const StartButton = styled.button`
    display: flex;
    justify-content: center;
    width: 57px;
    margin-right: 3px;
`;
const TaskSearch = styled.label`
    display: flex;
    align-items: center;
    gap: 12px;
    width: 273px;
    height: 40px;
    margin-right: 3px;
    padding: 0 5px 0 14px;
    font-size: 16px;
    background-color: #2A3960;
    border-radius: 20px;
    input{
        flex: 1;
        min-width: 0;
        outline: none;
    }
    input::placeholder{
        color: #C3C9D6;
    }
`;
const AppButton = styled.button`
    display: flex;
    flex-direction: column;
    align-items: center;
    justify-content: center;
    position: relative;
    width: 49px;
    height: 50px;
    margin: 0 3px;
    border-radius: 4px;
    background-color: ${props => props.$active ? "#22335B" : "transparent"};
    &::after{
        content: "";
        position: absolute;
        bottom: 1px;
        width: ${props => props.$active ? 20 : 8}px;
        height: 4px;
        border-radius: 2px;
        background-color: ${props => props.$active ? "#4CC2FF" : props.$open ? "#929BAE" : "transparent"};
    }
`;
const Tray = styled.div`
    display: flex;
    align-items: center;
    justify-content: flex-end;
    gap: 10px;
    padding-right: 25px;
    button{
        display: flex;
        margin-right: 13px;
    }
    > svg:nth-of-type(1){
        margin-right: 8px;
    }
`;
const Clock = styled.time`
    width: 70px;
    line-height: 20px;
    text-align: right;
`;
const Count = styled.span`
    width: 20px;
    height: 20px;
    font-size: 12px;
    line-height: 20px;
    text-align: center;
    color: #10203F;
    background-color: #4CC2FF;
    border-radius: 50%;
`;
